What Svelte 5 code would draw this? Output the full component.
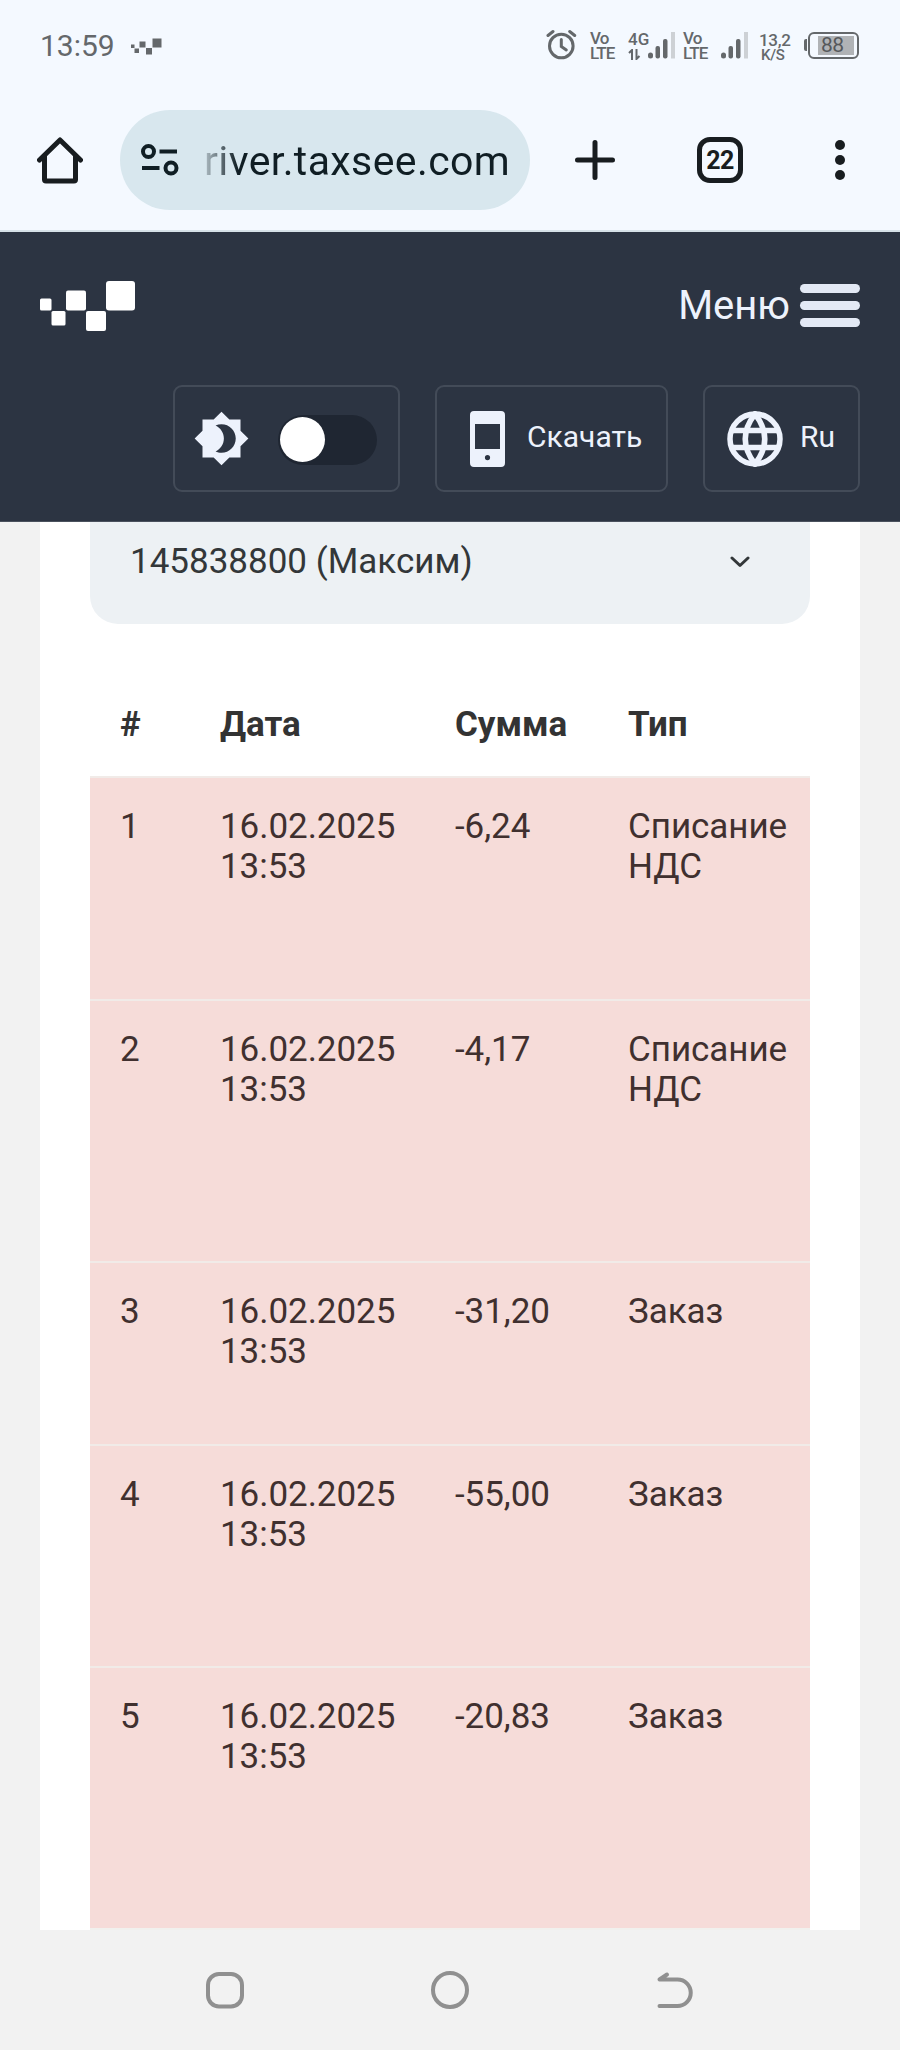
<script>
    let account = '145838800 (Максим)';

    let columns = ['#', 'Дата', 'Сумма', 'Тип'];

    let rows = [
        { date: '16.02.2025', time: '13:53', sum: '-6,24', type: 'Списание НДС', height: 222.5 },
        { date: '16.02.2025', time: '13:53', sum: '-4,17', type: 'Списание НДС', height: 262.5 },
        { date: '16.02.2025', time: '13:53', sum: '-31,20', type: 'Заказ', height: 182.5 },
        { date: '16.02.2025', time: '13:53', sum: '-55,00', type: 'Заказ', height: 222.5 },
        { date: '16.02.2025', time: '13:53', sum: '-20,83', type: 'Заказ', height: 262 },
    ];

    let darkTheme = false;

    function toggleTheme() {
        darkTheme = !darkTheme;
    }
</script>

{#snippet volte()}
    <div class="volte">Vo<br />LTE</div>
{/snippet}

{#snippet signal()}
    <svg class="signal" width="28" height="28" viewBox="0 0 28 28">
        <rect x="0" y="20.5" width="5" height="6" rx="2.5" />
        <rect x="7.5" y="14" width="4.5" height="12.5" rx="2" />
        <rect x="15" y="7" width="4.5" height="19.5" rx="2" />
        <rect x="23" y="0" width="4" height="26.5" fill="#cdd1d5" />
    </svg>
{/snippet}

<div class="screen">
    <!-- STATUS BAR -->
    <div class="status">
        <span class="clock">13:59</span>
        <svg class="status-logo" width="31" height="17" viewBox="0 0 31 17">
            <rect x="0" y="6.5" width="3.5" height="3.5" />
            <rect x="3.5" y="10.5" width="4.5" height="4.5" />
            <rect x="8.5" y="3.5" width="6" height="6" />
            <rect x="15" y="10" width="6" height="6.5" />
            <rect x="21.5" y="0.5" width="9" height="9" />
        </svg>

        <svg class="alarm" width="31" height="31" viewBox="0 0 31 31">
            <circle cx="15.3" cy="17" r="11.8" />
            <path d="M15.3 10.5v7l5 3.5" />
            <path d="M2 6.5l5-4M28.7 6.5l-5-4" />
        </svg>
        {@render volte()}
        <div class="net">
            <span>4G</span>
            <svg width="13" height="11" viewBox="0 0 13 11">
                <path d="M1 4l3-3v10M8.5 0v10l3-3" />
            </svg>
        </div>
        {@render signal()}
        <div class="volte-second">{@render volte()}</div>
        <div class="signal-second">{@render signal()}</div>
        <div class="speed">
            <span>13,2</span>
            <span class="speed-unit">K/S</span>
        </div>
        <div class="battery">
            <div class="battery-tip"></div>
            <div class="battery-body">
                <div class="battery-level">88</div>
            </div>
        </div>
    </div>

    <!-- BROWSER BAR -->
    <div class="browser">
        <svg class="home" width="46" height="48" viewBox="0 0 46 48">
            <path d="M2.5 24L23 4l20.5 20M7.5 20v23.5q0 1.5 1.5 1.5h28q1.5 0 1.5-1.5V20" />
        </svg>
        <div class="address">
            <svg width="38" height="32" viewBox="0 0 38 32">
                <circle cx="7.5" cy="7.5" r="5.5" />
                <path d="M18.5 7.5h17.5M1 24h17.5" />
                <circle cx="30" cy="24" r="5.5" />
            </svg>
            <span class="url">river.taxsee.com</span>
        </div>
        <svg class="plus" width="40" height="40" viewBox="0 0 40 40">
            <path d="M20 2.5v35M2.5 20h35" />
        </svg>
        <div class="tabs">22</div>
        <svg class="dots" width="10" height="40" viewBox="0 0 10 40">
            <circle cx="5" cy="5" r="5" />
            <circle cx="5" cy="20" r="5" />
            <circle cx="5" cy="35" r="5" />
        </svg>
    </div>

    <!-- SITE HEADER -->
    <header class="header">
        <div class="header-top">
            <svg width="95" height="51" viewBox="0 0 95 51" fill="#fff">
                <rect x="0" y="17.5" width="11.5" height="12" rx="1.5" />
                <rect x="11.5" y="30" width="14" height="14.5" rx="1.5" />
                <rect x="26" y="9.5" width="20" height="20" rx="2" />
                <rect x="46" y="30" width="20" height="20" rx="2" />
                <rect x="66" y="0" width="29" height="29.5" rx="3" />
            </svg>
            <div class="menu">
                <span>Меню</span>
                <div class="burger">
                    <i></i>
                    <i></i>
                    <i></i>
                </div>
            </div>
        </div>
        <div class="header-buttons">
            <div class="button button-theme">
                <svg width="57" height="57" viewBox="0 0 24 24" fill="#edf2fc">
                    <path d="M20 8.69V4h-4.69L12 .69 8.69 4H4v4.69L.69 12 4 15.31V20h4.69L12 23.31 15.31 20H20v-4.69L23.31 12 20 8.69zM12 18c-.89 0-1.74-.2-2.5-.55C11.56 16.5 13 14.42 13 12s-1.44-4.5-3.5-5.45C10.26 6.2 11.11 6 12 6c3.31 0 6 2.69 6 6s-2.69 6-6 6z" />
                </svg>
                <button class="switch" class:on={darkTheme} on:click={toggleTheme} aria-label="Тема">
                    <span class="knob"></span>
                </button>
            </div>
            <div class="button button-download">
                <svg width="35" height="56" viewBox="0 0 35 56" fill="#edf2fc">
                    <path fill-rule="evenodd" d="M4 0h27q4 0 4 4v48q0 4-4 4H4q-4 0-4-4V4q0-4 4-4zM5 13v25h25V13zM17.5 44a2.6 2.6 0 1 0 0 5.2 2.6 2.6 0 1 0 0-5.2z" />
                </svg>
                <span>Скачать</span>
            </div>
            <div class="button button-lang">
                <svg class="globe" width="56" height="56" viewBox="0 0 56 56">
                    <circle cx="28" cy="28" r="25" />
                    <path d="M28 3Q8.5 28 28 53Q47.5 28 28 3zM5 19.5h46M5 36.5h46" />
                </svg>
                <span>Ru</span>
            </div>
        </div>
    </header>

    <!-- CONTENT -->
    <main class="content">
        <div class="card">
            <div class="select">
                <span>{account}</span>
                <svg width="20" height="12" viewBox="0 0 20 12">
                    <path d="M2 2l8 7.5L18 2" />
                </svg>
            </div>
            <div class="table">
                <div class="row row-head">
                    {#each columns as column}
                        <div>{column}</div>
                    {/each}
                </div>
                {#each rows as row, i}
                    <div class="row row-minus" style="height: {row.height}px">
                        <div>{i + 1}</div>
                        <div>{row.date} {row.time}</div>
                        <div>{row.sum}</div>
                        <div>{row.type}</div>
                    </div>
                {/each}
                <div class="table-end"></div>
            </div>
        </div>
    </main>

    <!-- SYSTEM NAVIGATION -->
    <nav class="nav">
        <svg width="40" height="40" viewBox="0 0 40 40">
            <rect x="3" y="4" width="34" height="32.5" rx="11" />
        </svg>
        <svg width="40" height="40" viewBox="0 0 40 40">
            <circle cx="20" cy="20" r="17" />
        </svg>
        <svg width="40" height="40" viewBox="0 0 40 40">
            <path d="M12 4.5L4.5 9.5H22.5a13.2 13.2 0 0 1 0 26.5H4.5" />
        </svg>
    </nav>
</div>

<style>
    :global(body) {
        margin: 0;
        background: #f2f2f2;
    }

    .screen {
        width: 900px;
        height: 2050px;
        display: flex;
        flex-direction: column;
        overflow: hidden;
        font-family: Roboto, "Liberation Sans", sans-serif;
        background: #f2f2f2;
    }

    svg {
        display: block;
        flex: none;
    }

    /* status bar */
    .status {
        height: 92px;
        box-sizing: border-box;
        padding: 0 41px 0 40px;
        display: flex;
        align-items: center;
        background: #f4f9ff;
        color: #64686b;
    }

    .clock {
        width: 91px;
        font-size: 30px;
        line-height: 36px;
    }

    .status-logo {
        fill: #64686b;
        margin-right: auto;
    }

    .alarm {
        fill: none;
        stroke: #64686b;
        stroke-width: 3;
        stroke-linecap: round;
        margin: -3px 13px 0 0;
    }

    .volte,
    .net,
    .speed {
        font-size: 17px;
        line-height: 15px;
        font-weight: 500;
        white-space: nowrap;
    }

    .net,
    .speed {
        display: flex;
        flex-direction: column;
    }

    .volte {
        width: 38px;
        letter-spacing: -0.8px;
    }

    .net {
        width: 20px;
    }

    .net svg {
        fill: none;
        stroke: #64686b;
        stroke-width: 2;
        margin-top: 2px;
    }

    .signal {
        fill: #64686b;
    }

    .volte-second {
        margin-left: 7px;
    }

    .signal-second {
        margin-right: 10px;
    }

    .speed {
        width: 45px;
        margin-top: 3px;
        letter-spacing: -0.3px;
    }

    .speed-unit {
        font-size: 15px;
        padding-left: 2px;
    }

    .battery {
        display: flex;
        align-items: center;
        margin-top: -2px;
    }

    .battery-tip {
        width: 3px;
        height: 12px;
        border-radius: 2px 0 0 2px;
        background: #64686b;
        margin-right: 1px;
    }

    .battery-body {
        width: 51px;
        height: 27px;
        box-sizing: border-box;
        border: 2px solid #64686b;
        border-radius: 6px;
        padding: 2px 3px 2px 8px;
    }

    .battery-level {
        height: 19px;
        padding-left: 3px;
        background: #b0b3b6;
        color: #55585b;
        font-size: 21px;
        line-height: 19px;
        letter-spacing: -0.5px;
    }

    /* browser bar */
    .browser {
        height: 140px;
        box-sizing: border-box;
        padding: 0 55px 2px 37px;
        border-bottom: 2px solid #d6e1e8;
        display: flex;
        align-items: center;
        background: #f4f9ff;
    }

    .home {
        fill: none;
        stroke: #181d20;
        stroke-width: 5;
        stroke-linejoin: round;
        stroke-linecap: round;
    }

    .address {
        width: 410px;
        height: 100px;
        box-sizing: border-box;
        margin-left: 37px;
        padding-left: 21px;
        border-radius: 50px;
        display: flex;
        align-items: center;
        background: #d8e7ee;
    }

    .address svg {
        fill: none;
        stroke: #101e24;
        stroke-width: 4;
    }

    .url {
        margin: 2px 0 0 25px;
        font-size: 41px;
        line-height: 48px;
        letter-spacing: 0.4px;
        color: #101e24;
        -webkit-mask-image: linear-gradient(90deg, rgba(0, 0, 0, 0.2), #000 34px);
        mask-image: linear-gradient(90deg, rgba(0, 0, 0, 0.2), #000 34px);
    }

    .plus {
        fill: none;
        stroke: #181d20;
        stroke-width: 5;
        stroke-linecap: round;
        margin-left: 45px;
    }

    .tabs {
        width: 46px;
        height: 46px;
        box-sizing: border-box;
        margin-left: 82px;
        border: 5px solid #181d20;
        border-radius: 13px;
        text-align: center;
        font-size: 25px;
        line-height: 38px;
        letter-spacing: -0.5px;
        font-weight: bold;
        color: #181d20;
    }

    .dots {
        fill: #181d20;
        margin-left: auto;
    }

    /* site header */
    .header {
        height: 290px;
        box-sizing: border-box;
        padding: 49px 40px 0;
        background: #2c3442;
        border-bottom: 1px solid #4a515d;
        color: #edf2fc;
    }

    .header-top {
        display: flex;
        justify-content: space-between;
        align-items: flex-start;
        height: 104px;
    }

    .menu {
        display: flex;
        align-items: center;
        gap: 10px;
        font-size: 40px;
        line-height: 48px;
    }

    .menu span {
        padding-top: 1px;
        margin-bottom: -1px;
    }

    .burger {
        width: 60px;
        display: flex;
        flex-direction: column;
        gap: 8px;
    }

    .burger i {
        height: 9px;
        border-radius: 5px;
        background: #e3e9f5;
    }

    .header-buttons {
        display: flex;
        justify-content: flex-end;
        gap: 35px;
    }

    .button {
        height: 107px;
        box-sizing: border-box;
        border: 2px solid #434b58;
        border-radius: 9px;
        display: flex;
        align-items: center;
        font-size: 30px;
        line-height: 36px;
    }

    .button-theme {
        width: 227px;
        padding-left: 18px;
    }

    .button-download {
        width: 233px;
        padding-left: 33px;
    }

    .button-download span {
        margin: -3px 0 0 22px;
    }

    .button-lang {
        width: 157px;
        padding-left: 22px;
    }

    .button-lang span {
        margin: -3px 0 0 17px;
    }

    .switch {
        width: 99px;
        height: 50px;
        margin: 2px 0 0 28px;
        padding: 0 2px;
        border: 0;
        border-radius: 25px;
        display: flex;
        align-items: center;
        background: #1f2632;
    }

    .switch.on {
        justify-content: flex-end;
    }

    .knob {
        width: 45px;
        height: 45px;
        border-radius: 50%;
        background: #fff;
    }

    .globe {
        fill: none;
        stroke: #edf2fc;
        stroke-width: 5.5;
    }

    /* content */
    .content {
        height: 1408px;
        padding: 0 40px;
        overflow: hidden;
    }

    .card {
        height: 100%;
        padding: 0 50px;
        background: #fff;
    }

    .select {
        height: 102px;
        box-sizing: border-box;
        padding: 19px 60px 0 40px;
        border-radius: 0 0 28px 28px;
        display: flex;
        justify-content: space-between;
        align-items: flex-start;
        background: #edf1f4;
        color: #333739;
        font-size: 35px;
        line-height: 42px;
    }

    .select svg {
        fill: none;
        stroke: #333739;
        stroke-width: 3;
        stroke-linecap: round;
        stroke-linejoin: round;
        margin-top: 15px;
    }

    .table {
        margin-top: 52px;
        color: #40302f;
        font-size: 35px;
        line-height: 40px;
    }

    .row {
        box-sizing: border-box;
        display: grid;
        grid-template-columns: 100px 235px 173px 212px;
    }

    .row > div {
        padding: 29px 0 0 30px;
        letter-spacing: -0.05px;
    }

    .row-head {
        height: 100px;
        font-weight: bold;
        color: #333;
    }

    .row-minus {
        border-top: 2px solid #f1ebe8;
        background: #f6dcd9;
    }

    .table-end {
        height: 2px;
        background: #f1f1ee;
    }

    /* system navigation */
    .nav {
        flex: 1;
        padding: 0 205px;
        display: flex;
        justify-content: space-between;
        align-items: center;
    }

    .nav svg {
        fill: none;
        stroke: #909090;
        stroke-width: 4;
        stroke-linecap: round;
        stroke-linejoin: round;
    }
</style>
